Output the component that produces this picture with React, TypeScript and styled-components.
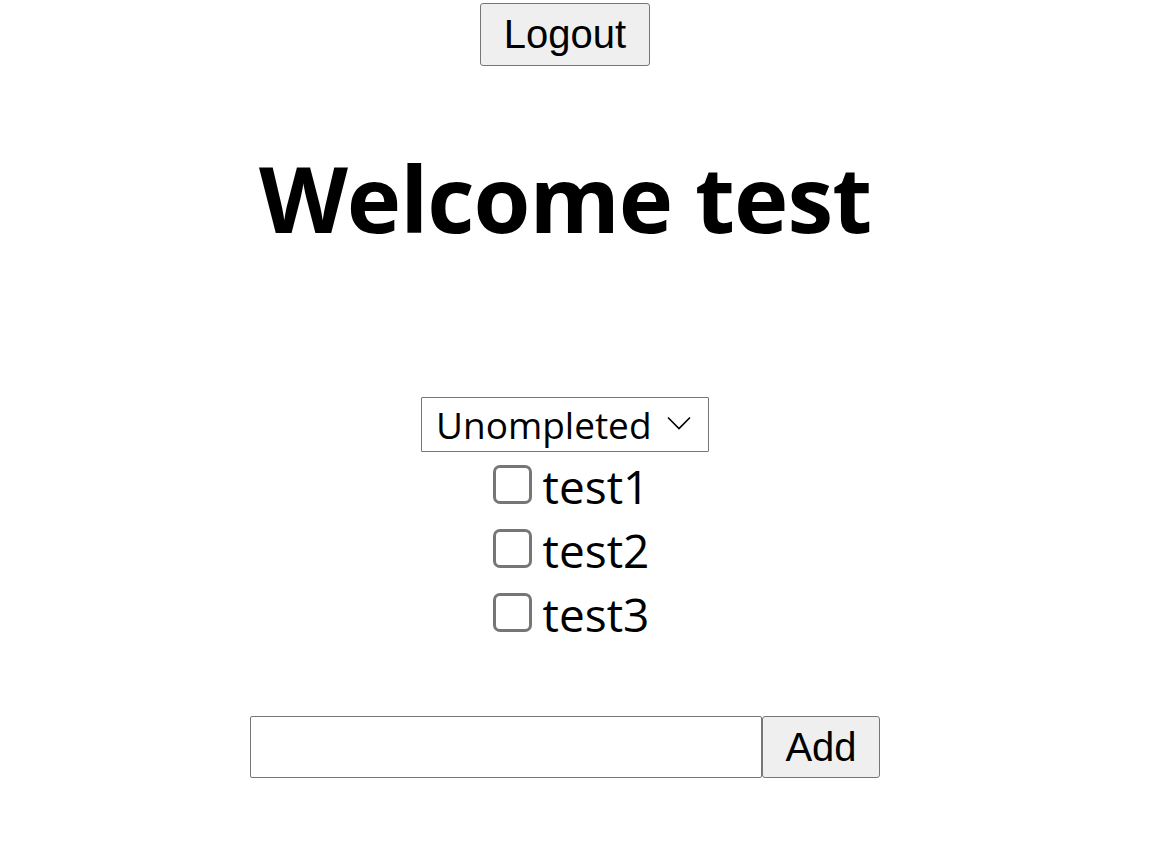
import React, { useState } from 'react';
import styled, { createGlobalStyle } from 'styled-components';

const GlobalStyle = createGlobalStyle`
  body {
    margin: 0;
    background: #ffffff;
    color: #000000;
    font-family: "Open Sans", "Noto Sans", sans-serif;
  }
`;

// Page column, everything centred
const Page = styled.div`
  width: 1130px;
  text-align: center;
`;

const NativeButton = styled.button`
  box-sizing: border-box;
  font-family: "Liberation Sans", Arial, sans-serif;
  font-size: 40px;
  color: #000;
  background-color: #efefef;
  border: 1px solid #767676;
  border-radius: 3px;
  cursor: pointer;
`;

const LogoutButton = styled(NativeButton)`
  margin-top: 3px;
  width: 170px;
  height: 63px;
  padding: 0 20px;
`;

const Title = styled.h1`
  font-size: 92px;
  font-weight: 700;
  line-height: 128px;
  margin: 68px 0 60px;
  letter-spacing: -1px;
`;

const FilterWrap = styled.div`
  padding-top: 75px;
`;

const SelectBox = styled.div`
  position: relative;
  display: inline-block;
  vertical-align: top;
`;

const Select = styled.select`
  box-sizing: border-box;
  appearance: none;
  width: 288px;
  height: 55px;
  padding: 0 50px 0 14px;
  font-family: "Open Sans", "Noto Sans", sans-serif;
  font-size: 37px;
  color: #000;
  background: #fff;
  border: 1px solid #767676;
  border-radius: 1px;
  outline: none;
  cursor: pointer;
`;

const Chevron = styled.svg`
  position: absolute;
  right: 18px;
  top: 19px;
  pointer-events: none;
`;

const TodoList = styled.div`
  padding-top: 2px;
  font-size: 46px;
  line-height: 64px;
`;

const TodoRow = styled.div`
  white-space: nowrap;
`;

const Check = styled.input`
  appearance: none;
  box-sizing: border-box;
  width: 39px;
  height: 39px;
  margin: 0 11px 0 12px;
  border: 3px solid #767676;
  border-radius: 7px;
  background: #fff;
  vertical-align: baseline;
  cursor: pointer;

  &:checked {
    background: #0075ff;
    border-color: #0075ff;
  }
`;

const AddForm = styled.form`
  display: flex;
  justify-content: center;
  margin-top: 70px;
`;

const TextInput = styled.input`
  box-sizing: border-box;
  width: 512px;
  height: 62px;
  padding: 0 6px;
  font-family: "Open Sans", "Noto Sans", sans-serif;
  font-size: 40px;
  border: 1px solid #767676;
  border-radius: 2px;
  outline: none;
`;

const AddButton = styled(NativeButton)`
  width: 118px;
  height: 62px;
  padding: 0;
`;

const App: React.FC = () => {
  const [filter, setFilter] = useState('uncompleted');
  const [todos, setTodos] = useState([
    { id: 1, text: 'test1', done: false },
    { id: 2, text: 'test2', done: false },
    { id: 3, text: 'test3', done: false },
  ]);
  const [input, setInput] = useState('');

  const toggle = (id: number) => {
    setTodos(todos.map((t) => (t.id === id ? { ...t, done: !t.done } : t)));
  };

  const handleAdd = (e: React.FormEvent) => {
    e.preventDefault();
    if (input.trim() === '') return;
    setTodos([...todos, { id: Date.now(), text: input, done: false }]);
    setInput('');
  };

  return (
    <Page>
      <GlobalStyle />
      <LogoutButton>Logout</LogoutButton>
      <Title>Welcome test</Title>

      <FilterWrap>
        <SelectBox>
          <Select value={filter} onChange={(e) => setFilter(e.target.value)}>
            <option value="all">All</option>
            <option value="completed">Completed</option>
            <option value="uncompleted">Unompleted</option>
          </Select>
          <Chevron width="24" height="14" viewBox="0 0 24 14" fill="none">
            <path d="M1 1.5 L12 12.5 L23 1.5" stroke="#000" strokeWidth="1.6" />
          </Chevron>
        </SelectBox>
      </FilterWrap>

      <TodoList>
        {todos.map((t) => (
          <TodoRow key={t.id}>
            <Check type="checkbox" checked={t.done} onChange={() => toggle(t.id)} />
            {t.text}
          </TodoRow>
        ))}
      </TodoList>

      <AddForm onSubmit={handleAdd}>
        <TextInput value={input} onChange={(e) => setInput(e.target.value)} />
        <AddButton type="submit">Add</AddButton>
      </AddForm>
    </Page>
  );
};

export default App;
